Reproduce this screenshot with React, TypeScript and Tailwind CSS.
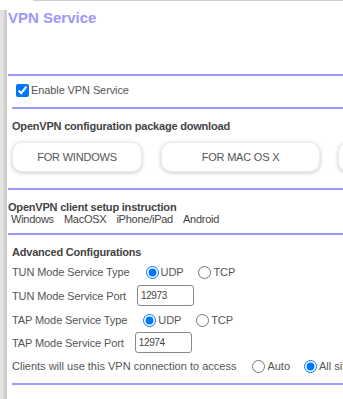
import type { ReactNode } from 'react';

const line = 'h-[2px] bg-[#9d9aff]';
const row = 'flex items-center whitespace-nowrap';

function Radio({ checked, className = '' }: { checked?: boolean; className?: string }) {
  return (
    <input
      type="radio"
      readOnly
      checked={!!checked}
      className={`m-0 h-[13px] w-[13px] shrink-0 accent-[#0075ff] ${className}`}
    />
  );
}

function Port({ value, className = '' }: { value: string; className?: string }) {
  return (
    <input
      readOnly
      value={value}
      className={`h-[21px] w-[57px] rounded-[3px] border border-[#8a8a8a] bg-white px-[3px] text-[10px] tracking-[-0.4px] text-[#444] outline-none ${className}`}
    />
  );
}

function DownloadButton({ children, className = '' }: { children?: ReactNode; className?: string }) {
  return (
    <button
      className={`h-[30px] shrink-0 rounded-[10px] border border-[#ececec] bg-white text-[11px] tracking-[-0.2px] text-[#555] shadow-[0_1px_4px_rgba(0,0,0,0.22)] ${className}`}
    >
      {children}
    </button>
  );
}

export default function App() {
  return (
    <div className="h-[399px] w-[343px] overflow-hidden bg-white font-['Liberation_Sans',Arial,sans-serif] text-[11px] leading-[14px] tracking-[-0.1px] text-[#555]">
      <div className="ml-[33px] h-px bg-[#cfcfcf]" />
      <div className="flex">
        <div className="mt-[9px] flex h-[400px] w-[7px] shrink-0">
          <div className="w-[4px] bg-[#e2e2e2]" />
          <div className="w-[3px] bg-[#cdcdcd]" />
        </div>

        <div className="min-w-0 flex-1">
          <h1 className="ml-[1px] pt-[8px] text-[15px] font-bold leading-[18px] tracking-normal text-[#9c97ff]">
            VPN Service
          </h1>

          <div className={`${line} ml-[1px] mt-[47px]`} />

          <label className={`${row} ml-[9px] mt-[7px] h-[14px]`}>
            <input
              type="checkbox"
              readOnly
              checked
              className="m-0 h-[13px] w-[13px] accent-[#0075ff]"
            />
            <span className="ml-[2px]">Enable VPN Service</span>
          </label>

          <div className={`${line} ml-[5px] mt-[10px]`} />

          <div className="ml-[5px] mt-[10px] font-bold tracking-[-0.2px] text-[#444]">
            OpenVPN configuration package download
          </div>

          <div className="ml-[5px] mt-[9px] flex">
            <DownloadButton className="w-[130px]">FOR WINDOWS</DownloadButton>
            <DownloadButton className="ml-[19px] w-[159px]">FOR MAC OS X</DownloadButton>
            <DownloadButton className="ml-[18px] w-[130px]" />
          </div>

          <div className={`${line} ml-[1px] mt-[16px]`} />

          <div className="ml-[1px] mt-[11px] font-bold leading-[12px] tracking-[-0.2px] text-[#444]">
            OpenVPN client setup instruction
          </div>
          <div className="ml-[4px] flex gap-[10px] leading-[12px] tracking-[-0.25px] text-[#444]">
            <span>Windows</span>
            <span>MacOSX</span>
            <span>iPhone/iPad</span>
            <span>Android</span>
          </div>

          <div className={`${line} ml-[1px] mt-[8px]`} />

          <div className="ml-[5px] mt-[10px] font-bold tracking-[-0.2px] text-[#444]">
            Advanced Configurations
          </div>

          <div className={`${row} ml-[5px] mt-[6px] h-[14px]`}>
            <span>TUN Mode Service Type</span>
            <Radio checked className="ml-[16px]" />
            <span className="ml-[2px]">UDP</span>
            <Radio className="ml-[15px]" />
            <span className="ml-[2px]">TCP</span>
          </div>

          <div className={`${row} ml-[5px] mt-[6px] h-[21px]`}>
            <span>TUN Mode Service Port</span>
            <Port value="12973" className="ml-[11px]" />
          </div>

          <div className={`${row} ml-[5px] mt-[7px] h-[14px]`}>
            <span>TAP Mode Service Type</span>
            <Radio checked className="ml-[16px]" />
            <span className="ml-[2px]">UDP</span>
            <Radio className="ml-[15px]" />
            <span className="ml-[2px]">TCP</span>
          </div>

          <div className={`${row} ml-[5px] mt-[5px] h-[21px]`}>
            <span>TAP Mode Service Port</span>
            <Port value="12974" className="ml-[11px]" />
          </div>

          <div className={`${row} ml-[5px] mt-[6px] h-[14px] tracking-normal`}>
            <span>Clients will use this VPN connection to access</span>
            <Radio className="ml-[16px]" />
            <span className="ml-[2px]">Auto</span>
            <Radio checked className="ml-[14px]" />
            <span className="ml-[2px]">All sites</span>
          </div>

          <div className={`${line} ml-[5px] mt-[10px]`} />
        </div>
      </div>
    </div>
  );
}
